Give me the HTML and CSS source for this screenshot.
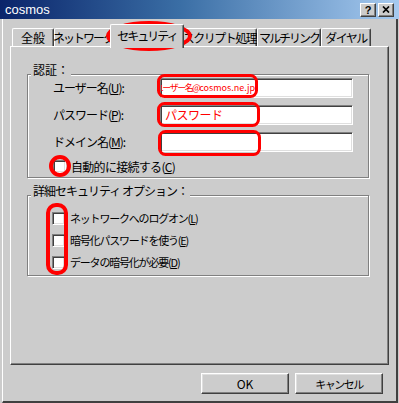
FILE: index.html
```html
<!DOCTYPE html>
<html>

<head>
    <title>cosmos</title>
    <link rel="stylesheet" href="styles.css">
</head>

<body>
    <div class="window">
        <div class="titlebar">
            <span class="titlebar-text">cosmos</span>
            <div class="titlebar-buttons">
                <span class="titlebar-button titlebar-button-help">?</span>
                <span class="titlebar-button">
                    <svg width="8" height="7" viewBox="0 0 8 7"><path d="M1 0.5L7 6.5M7 0.5L1 6.5" stroke="#000" stroke-width="1.7"/></svg>
                </span>
            </div>
        </div>

        <div class="frame">
            <div class="tabs">
                <div class="tab tab-general">全般</div>
                <div class="tab tab-network">ネットワーク</div>
                <div class="tab tab-security tab-selected">セキュリティ</div>
                <div class="tab tab-script">スクリプト処理</div>
                <div class="tab tab-multilink">マルチリンク</div>
                <div class="tab tab-dial">ダイヤル</div>
            </div>

            <div class="panel">
                <div class="group group-auth">
                    <div class="group-title">認証：</div>
                    <div class="group-body">
                        <div class="field-row">
                            <label class="field-label">ユーザー名(<u>U</u>):</label>
                            <div class="field-input field-input-user">
                                <span class="field-value-user"><span class="field-value-kana">ユーザー名@</span>cosmos.ne.jp</span>
                            </div>
                        </div>
                        <div class="field-row">
                            <label class="field-label">パスワード(<u>P</u>):</label>
                            <div class="field-input"><span class="field-value-password">パスワード</span></div>
                        </div>
                        <div class="field-row">
                            <label class="field-label">ドメイン名(<u>M</u>):</label>
                            <div class="field-input"></div>
                        </div>
                        <div class="check-row check-row-auto">
                            <span class="checkbox"></span>
                            <span class="check-label">自動的に接続する(<u>C</u>)</span>
                        </div>
                    </div>
                </div>

                <div class="group group-advanced">
                    <div class="group-title">詳細セキュリティ オプション：</div>
                    <div class="group-body group-body-checks">
                        <div class="check-row">
                            <span class="checkbox"></span>
                            <span class="check-label">ネットワークへのログオン(<u>L</u>)</span>
                        </div>
                        <div class="check-row">
                            <span class="checkbox"></span>
                            <span class="check-label">暗号化パスワードを使う(<u>E</u>)</span>
                        </div>
                        <div class="check-row">
                            <span class="checkbox"></span>
                            <span class="check-label">データの暗号化が必要(<u>D</u>)</span>
                        </div>
                    </div>
                </div>
            </div>

            <div class="buttons">
                <button class="button">OK</button>
                <button class="button button-cancel">キャンセル</button>
            </div>
        </div>

        <!-- red marks drawn over the screenshot -->
        <svg class="marks" width="399" height="403" viewBox="0 0 399 403">
            <g fill="none" stroke="#ff0000">
                <ellipse cx="149" cy="36" rx="41" ry="13" stroke-width="4"/>
                <rect x="158.5" y="75.5" width="98" height="21" rx="6" stroke-width="3"/>
                <rect x="158.5" y="103.5" width="100" height="22" rx="6" stroke-width="3"/>
                <rect x="159.5" y="131.5" width="100" height="23" rx="6" stroke-width="3"/>
                <circle cx="60" cy="166" r="9" stroke-width="4"/>
                <rect x="48" y="205" width="18" height="68" rx="8" stroke-width="4"/>
            </g>
        </svg>
    </div>
</body>

</html>
```

FILE: styles.css
```css
body {
    margin: 0;
    background: #cccccc;
    font-family: "Noto Sans CJK JP", sans-serif;
    font-size: 12px;
    line-height: 14px;
    color: #000;
}

.window {
    position: relative;
    width: 399px;
    height: 403px;
    display: flex;
    flex-direction: column;
    background: #cccccc;
}

.titlebar {
    height: 19px;
    flex-shrink: 0;
    display: flex;
    align-items: center;
    justify-content: space-between;
    padding: 0 5px 0 5px;
    background: linear-gradient(to right, #0a246a 0%, #3a6ea5 45%, #a6caf0 100%);
}

.titlebar-text {
    color: #fff;
    font-family: "Liberation Sans", sans-serif;
    font-size: 13px;
}

.titlebar-buttons {
    display: flex;
    gap: 2px;
}

.titlebar-button {
    width: 16px;
    height: 14px;
    box-sizing: border-box;
    display: flex;
    align-items: center;
    justify-content: center;
    background: #cccccc;
    border: 1px solid;
    border-color: #fff #404040 #404040 #fff;
    box-shadow: inset -1px -1px 0 #808080;
}

.titlebar-button-help {
    font-family: "Liberation Sans", sans-serif;
    font-weight: bold;
    font-size: 11px;
    line-height: 12px;
}

.frame {
    flex: 1;
    margin: 0 1px 0 2px;
    border-left: 1px solid #fff;
    border-right: 2px solid #404040;
    border-bottom: 2px solid #404040;
    padding: 0 7px;
    display: flex;
    flex-direction: column;
}

.tabs {
    height: 22px;
    margin-top: 5px;
    padding-left: 2px;
    display: flex;
    align-items: flex-end;
    letter-spacing: -2px;
}

.tab {
    height: 18px;
    box-sizing: border-box;
    display: flex;
    align-items: center;
    justify-content: center;
    white-space: nowrap;
    border-top: 1px solid #fff;
    border-left: 1px solid #fff;
    border-right: 1px solid #404040;
    border-radius: 2px 2px 0 0;
    box-shadow: inset -1px 0 0 #808080;
    background: #cccccc;
}

.tab-general { width: 42px; letter-spacing: 0; }
.tab-network { width: 58px; }
.tab-script { width: 75px; letter-spacing: -1.5px; }
.tab-multilink { width: 64px; }
.tab-dial { width: 50px; letter-spacing: -1.5px; }

.tab-selected {
    position: relative;
    z-index: 1;
    width: 74px;
    height: 24px;
    margin: 0 -2px -2px -2px;
    padding-bottom: 2px;
}

.panel {
    height: 319px;
    box-sizing: border-box;
    border: 1px solid;
    border-color: #fff #404040 #404040 #fff;
    box-shadow: inset -1px -1px 0 #808080;
}

.group {
    border: 1px solid #808080;
    box-shadow: inset 1px 1px 0 #fff, 1px 1px 0 #fff;
    margin: 0 19px 0 16px;
    padding-bottom: 2px;
}

.group-auth {
    margin-top: 27px;
}

.group-advanced {
    margin-top: 17px;
}

.group-title {
    width: fit-content;
    margin: -11px 0 0 3px;
    padding: 0 2px;
    line-height: 12px;
    background: #cccccc;
}

.group-advanced .group-title {
    letter-spacing: -1px;
}

.group-body {
    padding: 2px 0 0 25px;
}

.group-body-checks {
    padding: 10px 0 0 24px;
}

.field-row {
    height: 20px;
    margin-bottom: 7px;
    display: flex;
    align-items: center;
}

.field-label {
    width: 107px;
    letter-spacing: -1px;
}

.field-input {
    width: 193px;
    height: 20px;
    box-sizing: border-box;
    overflow: hidden;
    display: flex;
    align-items: center;
    background: #fff;
    border: 1px solid;
    border-color: #808080 #fff #fff #808080;
    box-shadow: inset 1px 1px 0 #404040, inset -1px -1px 0 #dfdfdf;
}

.field-input-user {
    justify-content: flex-end;
    padding-right: 97px;
}

.field-value-user {
    flex-shrink: 0;
    color: #ff0000;
    font-size: 9px;
    white-space: nowrap;
}

.field-value-kana {
    letter-spacing: -1.5px;
}

.field-value-password {
    color: #ff0000;
    padding-left: 4px;
    letter-spacing: -0.5px;
}

.check-row {
    height: 22px;
    display: flex;
    align-items: center;
}

.check-label {
    letter-spacing: -0.7px;
}

.group-body-checks .check-label {
    font-size: 11px;
    letter-spacing: -1.2px;
}

.check-row-auto {
    height: 17px;
    margin-top: -1px;
}

.checkbox {
    width: 13px;
    height: 13px;
    box-sizing: border-box;
    margin-right: 5px;
    background: #fff;
    border: 1px solid;
    border-color: #808080 #fff #fff #808080;
    box-shadow: inset 1px 1px 0 #404040, inset -1px -1px 0 #dfdfdf;
}

.buttons {
    display: flex;
    justify-content: flex-end;
    gap: 6px;
    margin: 8px 6px 0 0;
}

.button {
    width: 88px;
    height: 21px;
    box-sizing: border-box;
    padding: 0;
    font: inherit;
    background: #cccccc;
    border: 1px solid;
    border-color: #fff #404040 #404040 #fff;
    box-shadow: inset -1px -1px 0 #808080, inset 1px 1px 0 #dfdfdf;
}

.button-cancel {
    font-size: 11px;
    letter-spacing: -1.5px;
}

.marks {
    position: absolute;
    left: 0;
    top: 0;
    pointer-events: none;
}
```
